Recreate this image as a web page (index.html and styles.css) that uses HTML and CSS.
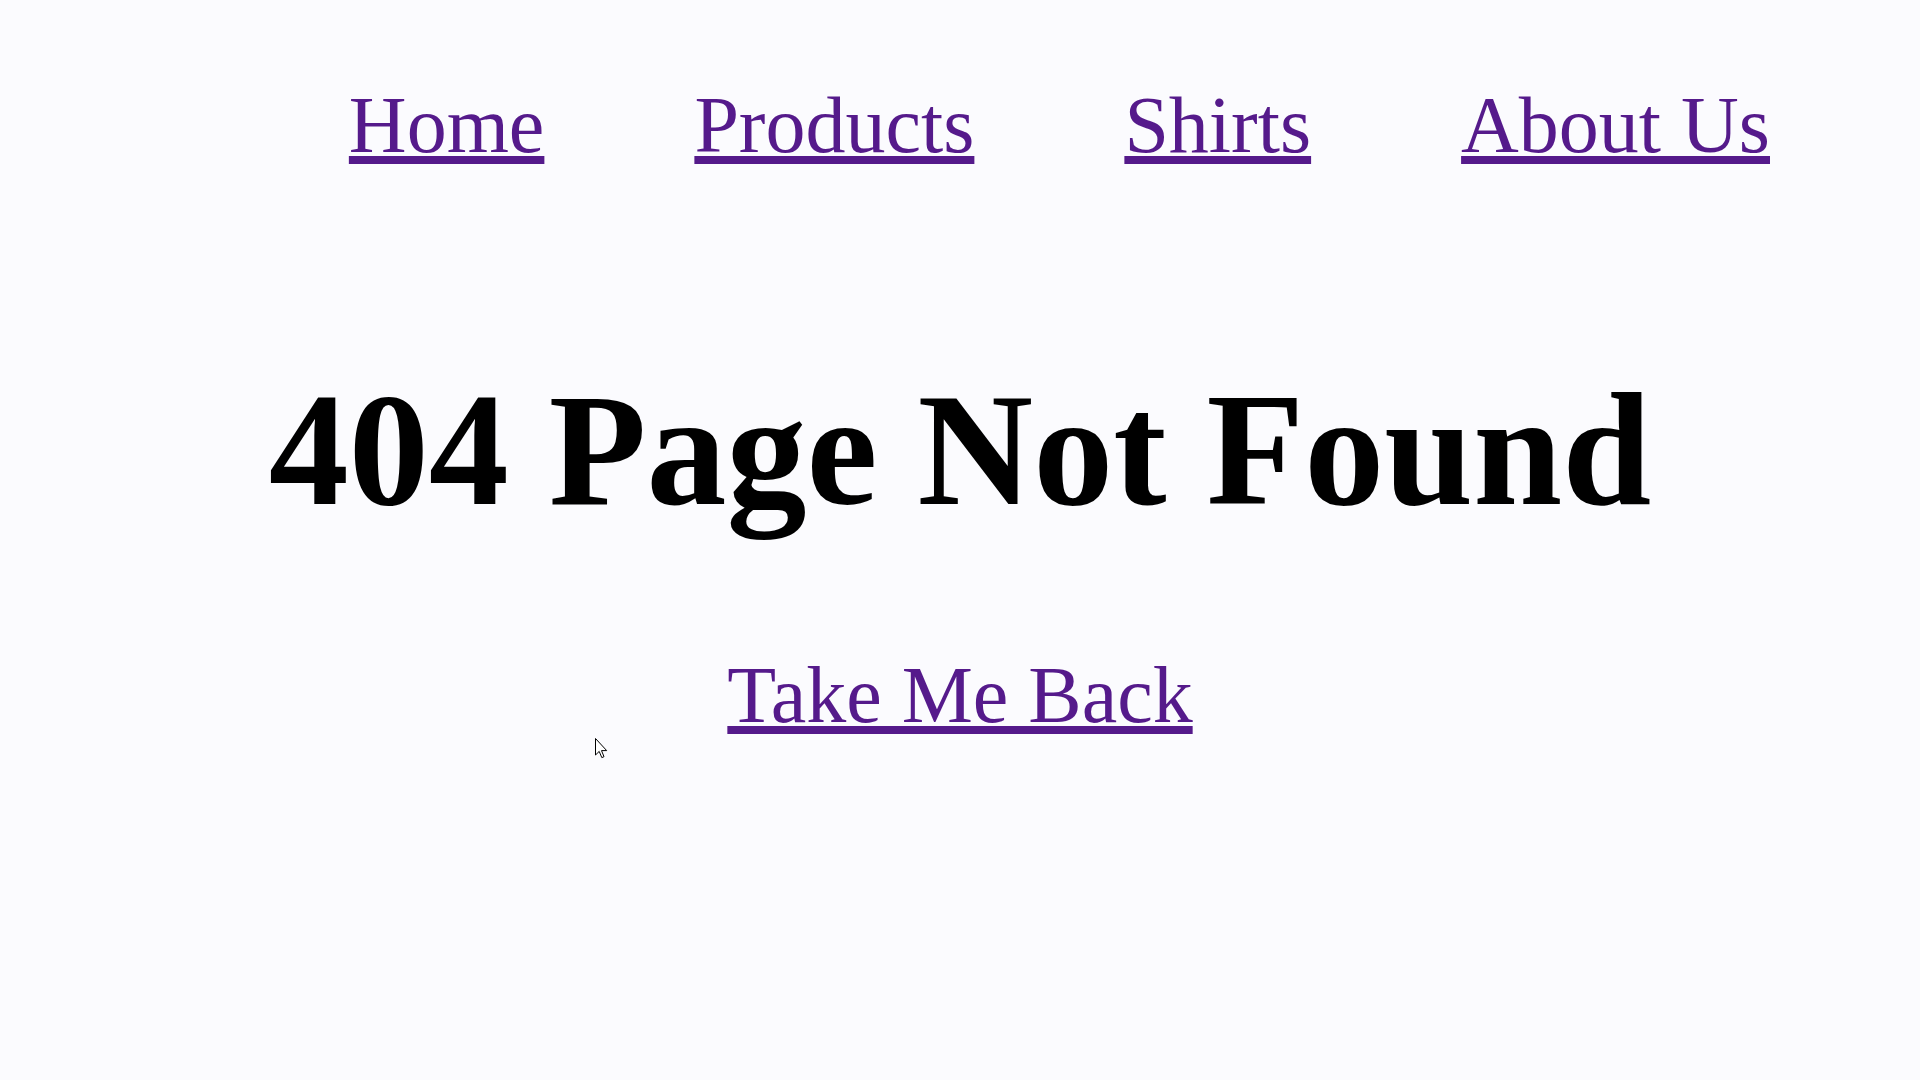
FILE: index.html
```html
<!DOCTYPE html>
<html lang="en">
<head>
<meta charset="utf-8">
<title>404 Page Not Found</title>
<link rel="stylesheet" href="styles.css">
</head>
<body>
  <nav class="nav">
    <a class="nav-link" href="#">Home</a>
    <a class="nav-link" href="#">Products</a>
    <a class="nav-link" href="#">Shirts</a>
    <a class="nav-link" href="#">About Us</a>
  </nav>
  <main class="main">
    <h1 class="title">404 Page Not Found</h1>
    <a class="back-link" href="#">Take Me Back</a>
  </main>
  <svg class="cursor" width="13" height="21" viewBox="0 0 13 21" aria-hidden="true">
    <path d="M0.5 0.5 L0.5 17 L4.2 13.4 L6.8 19.6 L9 18.7 L6.5 12.6 L11.7 12.6 Z" fill="#fff" stroke="#000" stroke-width="1" stroke-linejoin="miter"/>
  </svg>
</body>
</html>
```

FILE: styles.css
```css
html, body {
  margin: 0;
  padding: 0;
}

body {
  background: #fbfbfe;
  font-family: "Liberation Serif", "Times New Roman", serif;
  color: #000;
  min-height: 1080px;
  position: relative;
}

.nav {
  display: flex;
  justify-content: flex-end;
  gap: 150px;
  padding: 85px 150px 0 0;
  height: 80px;
}

.nav-link,
.back-link {
  font-size: 80px;
  line-height: 80px;
  color: #551a8b;
  text-decoration: underline;
  text-decoration-thickness: 8px;
  text-underline-offset: 4px;
}

.main {
  display: flex;
  flex-direction: column;
  align-items: center;
}

.title {
  margin: 205px 0 0;
  font-size: 160px;
  line-height: 160px;
  font-weight: bold;
}

.back-link {
  margin-top: 125px;
}

.cursor {
  position: absolute;
  left: 595px;
  top: 738px;
}
```
